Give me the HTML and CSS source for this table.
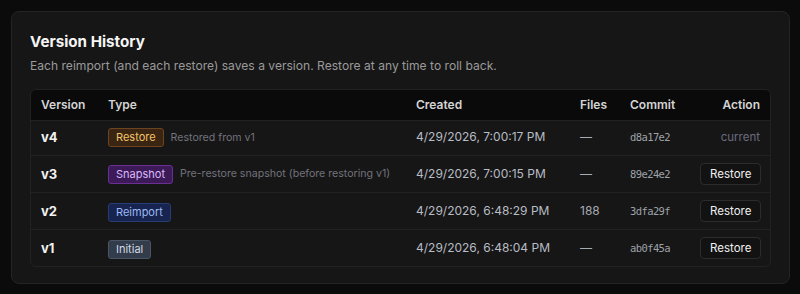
FILE: index.html
```html
<!DOCTYPE html>
<html lang="en">
<head>
<meta charset="utf-8">
<title>Version History</title>
<link rel="stylesheet" href="styles.css">
</head>
<body>
<section class="card">
  <h2 class="title">Version History</h2>
  <p class="subtitle">Each reimport (and each restore) saves a version. Restore at any time to roll back.</p>
  <div class="table-wrap">
    <table class="versions">
      <colgroup>
        <col class="c-version">
        <col class="c-type">
        <col class="c-created">
        <col class="c-files">
        <col class="c-commit">
        <col class="c-action">
      </colgroup>
      <thead>
        <tr>
          <th>Version</th>
          <th>Type</th>
          <th>Created</th>
          <th>Files</th>
          <th>Commit</th>
          <th class="right">Action</th>
        </tr>
      </thead>
      <tbody>
        <tr class="short">
          <td class="ver">v4</td>
          <td><span class="badge b-restore">Restore</span><span class="note">Restored from v1</span></td>
          <td class="created">4/29/2026, 7:00:17 PM</td>
          <td class="files">—</td>
          <td class="commit">d8a17e2</td>
          <td class="right"><span class="current">current</span></td>
        </tr>
        <tr>
          <td class="ver">v3</td>
          <td><span class="badge b-snapshot">Snapshot</span><span class="note">Pre-restore snapshot (before restoring v1)</span></td>
          <td class="created">4/29/2026, 7:00:15 PM</td>
          <td class="files">—</td>
          <td class="commit">89e24e2</td>
          <td class="right"><button class="btn">Restore</button></td>
        </tr>
        <tr>
          <td class="ver">v2</td>
          <td><span class="badge b-reimport">Reimport</span></td>
          <td class="created">4/29/2026, 6:48:29 PM</td>
          <td class="files">188</td>
          <td class="commit">3dfa29f</td>
          <td class="right"><button class="btn">Restore</button></td>
        </tr>
        <tr>
          <td class="ver">v1</td>
          <td><span class="badge b-initial">Initial</span></td>
          <td class="created">4/29/2026, 6:48:04 PM</td>
          <td class="files">—</td>
          <td class="commit">ab0f45a</td>
          <td class="right"><button class="btn">Restore</button></td>
        </tr>
      </tbody>
    </table>
  </div>
</section>
</body>
</html>
```

FILE: styles.css
```css
* { box-sizing: border-box; }

html, body {
  margin: 0;
  background: #0b0b0b;
}

body {
  padding: 11px 10px 11px 11px;
  font-family: Inter, "Noto Sans", sans-serif;
  color: #e8e8e8;
}

.card {
  background: #161616;
  border: 1px solid #242424;
  border-radius: 8px;
  padding: 18px 18px 16px 18px;
}

.title {
  margin: 0 0 2px 0;
  font-size: 15.2px;
  line-height: 24px;
  font-weight: 700;
  color: #f5f5f5;
}

.subtitle {
  margin: 0;
  font-size: 12.1px;
  line-height: 20px;
  color: #9a9a9a;
}

.table-wrap {
  margin-top: 13px;
  border: 1px solid #222;
  border-radius: 6px;
  overflow: hidden;
}

.versions {
  width: 100%;
  border-collapse: collapse;
  table-layout: fixed;
}

.c-version { width: 67px; }
.c-type { width: 308px; }
.c-created { width: 164px; }
.c-files { width: 50px; }
.c-commit { width: 70px; }
.c-action { width: auto; }

.versions th {
  background: #0a0a0a;
  text-align: left;
  font-size: 12px;
  font-weight: 600;
  line-height: 16px;
  color: #d4d4d4;
  padding: 7px 10px;
}

.versions td {
  padding: 7px 10px;
  font-size: 12px;
  line-height: 22px;
  border-top: 1px solid #222;
  white-space: nowrap;
  vertical-align: middle;
}

.versions tr.short td { padding-top: 5px; padding-bottom: 6px; }

.right { text-align: right !important; }

.ver {
  font-weight: 700;
  font-size: 13px !important;
  color: #f2f2f2;
}

.badge {
  display: inline-block;
  font-size: 11px;
  line-height: 17px;
  padding: 0 7px;
  border-radius: 3px;
  border: 1px solid;
  vertical-align: middle;
}

.b-restore { background: #3a2412; border-color: #6e4320; color: #f2c46a; }
.b-snapshot { background: #3b1a57; border-color: #6b2e94; color: #dcb8fb; }
.b-reimport { background: #17244f; border-color: #283c74; color: #9cb8f2; }
.b-initial { background: #323c4b; border-color: #4a5566; color: #d3dae3; }

.note {
  margin-left: 7px;
  font-size: 10.6px;
  color: #72727c;
  vertical-align: middle;
}

.created {
  color: #b8bcc4;
}

.files {
  color: #a8acb2;
}

.commit {
  font-family: "DejaVu Sans Mono", monospace;
  font-size: 10.5px !important;
  letter-spacing: -0.6px;
  color: #9ea2a8;
}

.current {
  font-size: 11.5px;
  color: #6b6b80;
}

.btn {
  display: inline-block;
  font-family: Inter, "Noto Sans", sans-serif;
  font-size: 11.5px;
  line-height: 16px;
  height: 22px;
  padding: 2px 9px;
  background: #121212;
  color: #f0f0f0;
  border: 1px solid #2c2c2c;
  border-radius: 4px;
  vertical-align: top;
}
```
